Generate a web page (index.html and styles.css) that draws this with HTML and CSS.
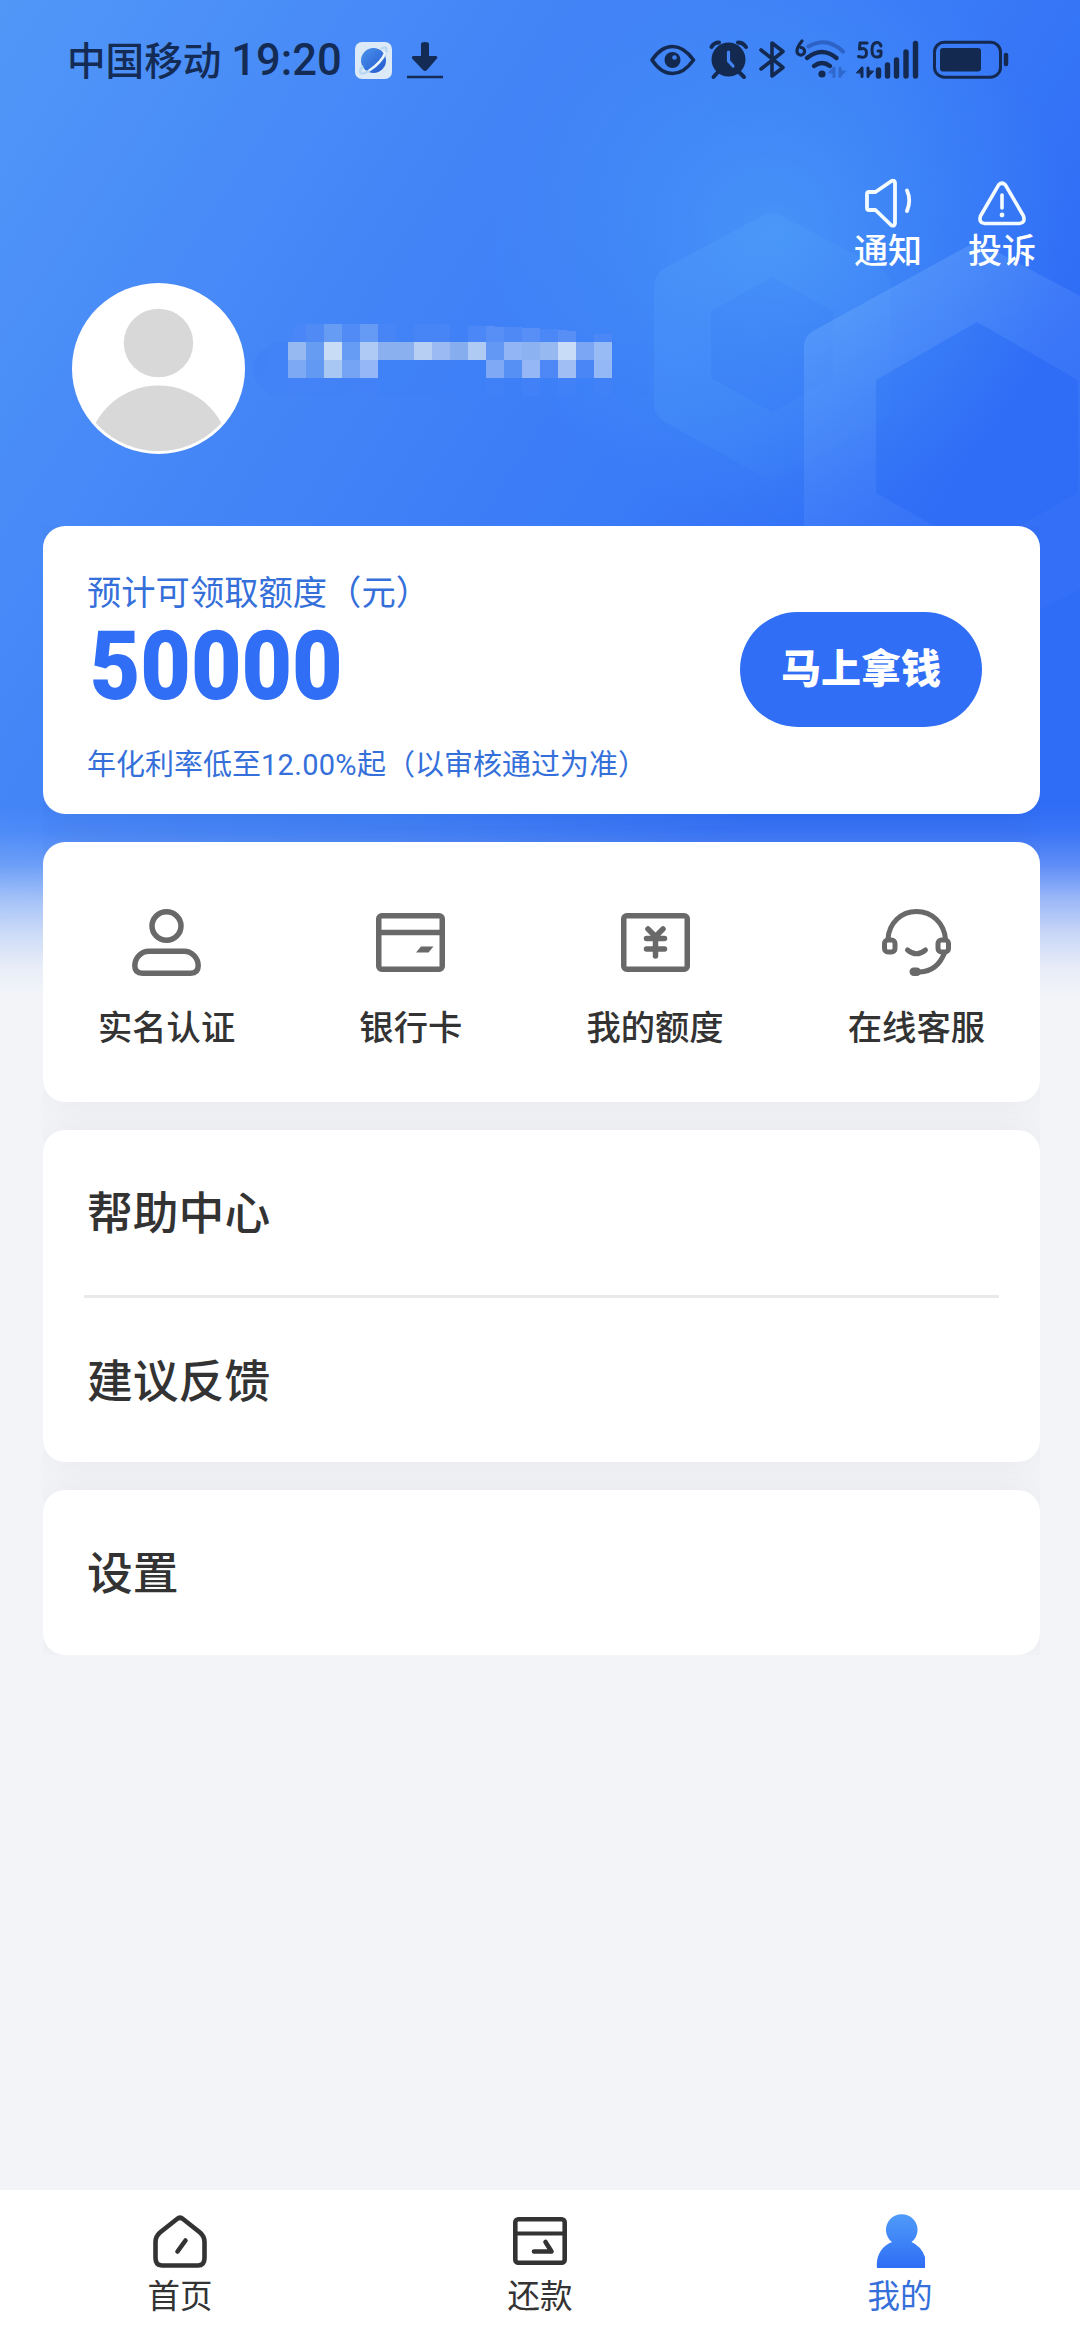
FILE: index.html
```html
<!DOCTYPE html>
<html lang="zh-CN">
<head>
<meta charset="utf-8">
<title>我的</title>
<link rel="stylesheet" href="styles.css">
</head>
<body>
<div class="page">
  <div class="backdrop">
    <svg width="1080" height="1000" viewBox="0 0 1080 1000">
      <defs>
        <linearGradient id="hexSmall" gradientUnits="userSpaceOnUse" x1="680" y1="260" x2="850" y2="420">
          <stop offset="0" stop-color="#55a4fa" stop-opacity=".26"/>
          <stop offset=".5" stop-color="#55a4fa" stop-opacity=".18"/>
          <stop offset="1" stop-color="#55a4fa" stop-opacity=".04"/>
        </linearGradient>
        <linearGradient id="hexLarge" gradientUnits="userSpaceOnUse" x1="820" y1="300" x2="1010" y2="560">
          <stop offset="0" stop-color="#78b4ff" stop-opacity=".36"/>
          <stop offset=".5" stop-color="#6aa0ff" stop-opacity=".2"/>
          <stop offset="1" stop-color="#5a90ff" stop-opacity=".08"/>
        </linearGradient>
      </defs>
      <path fill="url(#hexSmall)" fill-rule="evenodd" d="M762 216Q772 211 782 216L880 268Q891 275 891 288V404Q891 416 880 422L782 476Q772 481 762 476L665 422Q654 416 654 404V288Q654 275 665 268ZM772 277L711 311V378L772 412L833 378V311Z"/>
      <path fill="url(#hexLarge)" fill-rule="evenodd" d="M966 247Q977 240 988 247L1140 328V560L977 640L804 560V346Q804 337 813 331ZM977 322L876 380V493L977 550L1078 493V380Z"/>
    </svg>
  </div>

  <header class="status">
    <div class="status-left">
      <span class="carrier">中国移动</span><span class="clock">19:20</span>
      <svg class="app" width="37" height="37" viewBox="0 0 37 37">
        <defs><linearGradient id="planet" x1="0" y1="0" x2="1" y2="1"><stop offset="0" stop-color="#4a93ec"/><stop offset="1" stop-color="#2457cf"/></linearGradient></defs>
        <rect width="37" height="37" rx="7" fill="#dce9f6"/>
        <circle cx="18.500" cy="18.500" r="12.500" fill="url(#planet)"/>
        <path d="M26 7Q33 3 31 10Q27 20 15 28Q8 33 5.500 31Q4 28 8 24" fill="none" stroke="#b9d8f2" stroke-width="2.500"/>
        <path d="M30.500 10Q26 21 14 28.500" fill="none" stroke="#edf5fc" stroke-width="2"/>
      </svg>
      <svg width="36" height="38" viewBox="0 0 36 38"><path d="M14 3Q14 1 18 1T22 3V15H29Q31.500 16 29.500 18L20 29Q18 31 16 29L5.500 18Q4 16 6 15H14Z" fill="#142c55"/><path d="M0 36H36" stroke="#142c55" stroke-width="2.600"/></svg>
    </div>
    <svg class="status-icons" width="360" height="44" viewBox="650 38 360 44" fill="none" stroke="#132950" stroke-linecap="round" stroke-linejoin="round">
      <path d="M652 60Q661 46.500 672.500 46.500T693.500 60Q684 73.500 672.500 73.500T652 60Z" stroke-width="3.600"/>
      <circle cx="672.500" cy="60" r="8" fill="#132950" stroke="none"/><circle cx="674.500" cy="57.500" r="2.300" fill="#3f80f4" stroke="none"/>
      <circle cx="728.500" cy="59.500" r="17" fill="#132950" stroke="none"/>
      <path d="M711.500 47Q714 42.500 719 42.500M746 47Q743 42.500 738 42.500" stroke-width="4"/>
      <path d="M718 72L713.500 77M739 72L744 77" stroke-width="4"/>
      <path d="M728.500 52V61L733 66" stroke="#4384f4" stroke-width="3.200"/>
      <path d="M761 50L783 67.500L772 76V43L783 51.500L761 69" stroke-width="3.600"/>
      <path d="M802 41Q797 47 797 51A3.800 3.800 0 1 0 801 47.500" stroke-width="3.200"/>
      <path d="M808.500 46.500Q827 36 843 51.500" stroke="#2d62c7" stroke-width="4"/>
      <path d="M807 58Q822 46 836.500 58M814 66Q822 60 830 66" stroke-width="4.400"/>
      <circle cx="822" cy="74" r="3.600" fill="#132950" stroke="none"/>
      <path d="M834 68V76.500M840 68V76.500" stroke="#2f68cf" stroke-width="3"/>
      <path d="M828.500 72.500L834 67V73ZM845.500 71.500L840 77V71Z" fill="#2f68cf" stroke="#2f68cf" stroke-width="1"/>
      <path d="M867 43H860L859.500 49Q866.500 47 866.500 53T858.500 56.500M881 46Q880 42.500 877 42.500Q872 42.500 872 50T877 57Q881 57 881 54V51H878" stroke-width="3"/>
      <path d="M862 68V76.500M868 68V76.500" stroke-width="3"/>
      <path d="M856.500 72.500L862 67V73ZM873.500 71.500L868 77V71Z" fill="#132950" stroke-width="1"/>
      <path d="M878.500 70V76M887.500 65V76M896.500 60V76M906 52V76M915.500 43.500V76" stroke-width="5.400"/>
      <rect x="934.500" y="42.200" width="66" height="35" rx="10" stroke-width="3"/>
      <rect x="940" y="48" width="41" height="23.500" rx="3" fill="#132950" stroke="none"/>
      <path d="M1006 55V64" stroke-width="4.500"/>
    </svg>
  </header>

  <nav class="actions">
    <a class="action">
      <svg width="50" height="52" viewBox="0 0 50 52" fill="none" stroke="#f4fbff" stroke-width="3.800" stroke-linejoin="round" stroke-linecap="round"><path d="M4 17Q4 15 6 15H12.500L28.500 4Q32 3 32 6V46Q32 49.500 28.500 48.500L12.500 33H6Q4 33 4 31Z" /><path d="M44 13.500Q48.500 23 44 34"/></svg>
      <span>通知</span>
    </a>
    <a class="action">
      <svg width="50" height="52" viewBox="0 0 50 52" fill="none" stroke="#f4fbff" stroke-width="3.600" stroke-linecap="round"><path d="M21.500 8Q25 4.500 28.500 8L46.500 39Q48.500 46 42.500 46.500H7.500Q1.500 46 3.500 39Z"/><path d="M25 18V31"/><circle cx="25" cy="38" r="2.400" fill="#f4fbff" stroke="none"/></svg>
      <span>投诉</span>
    </a>
  </nav>

  <section class="profile">
    <svg class="avatar" width="173" height="171" viewBox="0 0 173 171">
      <defs><clipPath id="face"><ellipse cx="86.500" cy="84.500" rx="84" ry="83.500"/></clipPath></defs>
      <ellipse cx="86.500" cy="85.500" rx="86.500" ry="85.500" fill="#fff"/>
      <ellipse cx="86.500" cy="60" rx="34.700" ry="34.300" fill="#d8d8d8"/>
      <circle cx="86.500" cy="174" r="71.500" fill="#d8d8d8" clip-path="url(#face)"/>
    </svg>
    <svg class="masked-name" width="400" height="90" viewBox="252 324 400 90" shape-rendering="crispEdges">
      <path d="M270 347Q254 352 253 369Q254 386 270 394Z" fill="#4080f7" opacity=".6"/>
      <path d="M270 342H648V396H270Z" fill="#3d7ff7" opacity=".25"/>
      <path d="M291 342Q292 324 306 324V342Z" fill="#4a86f7"/>
      <path d="M306 324h18v18h-18z" fill="#4f8af5"/><path d="M324 324h18v18h-18z" fill="#669cf3"/><path d="M342 324h18v18h-18z" fill="#508bf6"/><path d="M360 324h18v18h-18z" fill="#659af5"/>
      <path d="M378 324h18v18h-18zM414 324h36v18h-36z" fill="#4785f6"/>
      <path d="M468 326h18v16h-18zM540 329h18v13h-18zM594 334h18v8h-18z" fill="#4b87f7"/>
      <path d="M486 326L504 327V342H486zM522 328h18v14h-18zM558 330l18 1v11h-18z" fill="#578ff6"/><path d="M504 327h18v15h-18z" fill="#4e89f6"/>
      <path d="M288 342h18v18h-18z" fill="#97b9f1"/><path d="M306 342h18v18h-18z" fill="#669df3"/><path d="M324 342h18v18h-18z" fill="#c8dcf6"/><path d="M342 342h18v18h-18z" fill="#669cf3"/><path d="M360 342h18v18h-18z" fill="#afcaf5"/><path d="M378 342h36v18h-36z" fill="#8bb0f0"/><path d="M414 342h18v18h-18z" fill="#b7cff2"/><path d="M432 342h18v18h-18z" fill="#9bbaf3"/><path d="M450 342h18v18h-18z" fill="#86adee"/><path d="M468 342h18v18h-18z" fill="#b0cbf3"/><path d="M486 342h18v18h-18z" fill="#6398f4"/><path d="M504 342h18v18h-18z" fill="#92b6f5"/><path d="M522 342h18v18h-18z" fill="#8db2f2"/><path d="M540 342h18v18h-18z" fill="#97b9f2"/><path d="M558 342h18v18h-18z" fill="#c8dcf7"/><path d="M576 342h18v18h-18z" fill="#7ba6f3"/><path d="M594 342h18v18h-18z" fill="#98baf5"/>
      <path d="M288 360h18v18h-18z" fill="#7da8f3"/><path d="M306 360h18v18h-18z" fill="#6199f3"/><path d="M324 360h18v18h-18z" fill="#a9c7f3"/><path d="M342 360h18v18h-18z" fill="#76a4f4"/><path d="M360 360h18v18h-18z" fill="#95b7f7"/><path d="M486 360h18v18h-18z" fill="#7fa9f5"/><path d="M504 360h18v18h-18z" fill="#5790f4"/><path d="M522 360h18v18h-18z" fill="#95b7f5"/><path d="M540 360h18v18h-18z" fill="#4d88f6"/><path d="M558 360h18v18h-18z" fill="#a1bef4"/><path d="M576 360h18v18h-18z" fill="#4b86f6"/><path d="M594 360h18v18h-18z" fill="#94b7f5"/>
      <path d="M288 378h90v18h-90zM486 378h18v18h-18zM522 378h18v18h-18zM558 378h18v18h-18zM594 378h18v18h-18z" fill="#4482f7" opacity=".6"/>
    </svg>
  </section>

  <main class="cards">
    <section class="card quota">
      <div class="quota-info">
        <p class="quota-label">预计可领取额度（元）</p>
        <p class="quota-amount">50000</p>
        <p class="quota-rate">年化利率低至<span class="rate-num">12.00%</span>起（以审核通过为准）</p>
      </div>
      <button class="cta">马上拿钱</button>
    </section>

    <section class="card shortcuts">
      <a class="shortcut">
        <svg width="69" height="67" viewBox="0 0 69 67" fill="none" stroke="#696969" stroke-width="5.500"><ellipse cx="34.500" cy="17" rx="14.500" ry="14.200"/><path d="M17 42.200H52C60 42.200 66.200 49 66.200 56.500Q66.200 64.200 58.500 64.200H10.500Q2.800 64.200 2.800 56.500C2.800 49 9 42.200 17 42.200Z"/></svg>
        <span>实名认证</span>
      </a>
      <a class="shortcut">
        <svg width="69" height="67" viewBox="0 0 69 67" fill="none" stroke="#696969" stroke-width="5.500"><rect x="2.750" y="6.750" width="63.500" height="53.500" rx="3"/><path d="M3 23.500H66"/><path d="M45 37.500H57.500L52.500 43.500H40Z" fill="#696969" stroke="none"/></svg>
        <span>银行卡</span>
      </a>
      <a class="shortcut">
        <svg width="69" height="67" viewBox="0 0 69 67" fill="none" stroke="#696969" stroke-width="5.500" stroke-linecap="round"><rect x="2.750" y="6.750" width="63.500" height="53.500" rx="3"/><path d="M27 20L34.500 27.500L42 20M25.500 29.500H43.500M25.500 40H43.500M34.500 27.500V47"/></svg>
        <span>我的额度</span>
      </a>
      <a class="shortcut">
        <svg width="69" height="67" viewBox="0 0 69 67" fill="none" stroke="#696969" stroke-width="5" stroke-linecap="round"><path d="M6 30C7 14 19 2.500 34.500 2.500S62 14 63.500 30"/><rect x="2.500" y="31" width="10.500" height="12" rx="3.500"/><rect x="56" y="31" width="10.500" height="12" rx="3.500"/><path d="M25.500 41Q34.500 48.500 43.500 41M62 45Q55 62 38 63"/><rect x="27.500" y="58.500" width="11.500" height="8.500" rx="4.200" fill="#696969" stroke="none"/></svg>
        <span>在线客服</span>
      </a>
    </section>

    <section class="card menu">
      <a class="menu-item">帮助中心</a>
      <a class="menu-item">建议反馈</a>
    </section>

    <section class="card menu">
      <a class="menu-item">设置</a>
    </section>
  </main>

  <footer class="tabs">
    <a class="tab">
      <svg width="54" height="54" viewBox="0 0 54 54" fill="none" stroke="#333" stroke-width="4.600" stroke-linecap="round"><path d="M24 5Q27 2.500 30 5L47 18.500Q51.500 22.500 51.500 28V44Q51.500 51.500 45 51.500H9Q2.500 51.500 2.500 44V28Q2.500 22.500 7 18.500Z"/><path d="M32.500 26.500L24.500 37.500"/></svg>
      <span>首页</span>
    </a>
    <a class="tab">
      <svg width="54" height="54" viewBox="0 0 54 54" fill="none" stroke="#333" stroke-width="4.600" stroke-linecap="round" stroke-linejoin="round"><rect x="2.300" y="5.300" width="49.400" height="43.500" rx="3"/><path d="M3 19.500H51" stroke-width="4"/><path d="M32.500 28L38.500 37.500H21"/></svg>
      <span>还款</span>
    </a>
    <a class="tab tab-active">
      <svg width="54" height="54" viewBox="0 0 54 54"><defs><linearGradient id="me" x1="0" y1="0" x2="0" y2="1"><stop offset="0" stop-color="#4f9bf9"/><stop offset="1" stop-color="#2f6df5"/></linearGradient></defs><path fill="url(#me)" d="M4 54C2.500 42 9 31.500 19 28A15.800 15.500 0 1 1 38.500 28Q48 32 52 43V54Z"/></svg>
      <span>我的</span>
    </a>
  </footer>
</div>
</body>
</html>
```

FILE: styles.css
```css
* { box-sizing: border-box; }

body {
  margin: 0;
  font-family: "Noto Sans CJK SC", sans-serif;
  color: #333;
  background: #f3f4f8;
}

p { margin: 0; }
svg { display: block; flex: none; }

.page {
  position: relative;
  display: flex;
  flex-direction: column;
  width: 1080px;
  height: 2340px;
  overflow: hidden;
}

/* decorative blue header that dissolves into the page */
.backdrop {
  position: absolute;
  inset: 0 0 auto;
  z-index: -1;
  height: 1000px;
  background:
    radial-gradient(circle at 775px 235px, rgba(74, 156, 248, .72), rgba(74, 156, 248, .35) 130px, rgba(74, 156, 248, 0) 290px),
    linear-gradient(123deg, #5197f8 0%, #4283f7 34%, #3a7bf7 54%, #2f6df6 74%, #2f6df6 100%);
  -webkit-mask-image: linear-gradient(#000 805px, rgba(0, 0, 0, .95) 830px, rgba(0, 0, 0, .76) 865px, rgba(0, 0, 0, .44) 900px, rgba(0, 0, 0, .22) 933px, rgba(0, 0, 0, .06) 967px, transparent 995px);
  mask-image: linear-gradient(#000 805px, rgba(0, 0, 0, .95) 830px, rgba(0, 0, 0, .76) 865px, rgba(0, 0, 0, .44) 900px, rgba(0, 0, 0, .22) 933px, rgba(0, 0, 0, .06) 967px, transparent 995px);
}

.status {
  display: flex;
  align-items: center;
  justify-content: space-between;
  height: 120px;
  padding: 0 70px 0 67px;
  color: #142c55;
}

.status-left {
  display: flex;
  align-items: center;
}

.carrier {
  padding-bottom: 4px;
  font-size: 38.600px;
  line-height: 60px;
  font-weight: 500;
}

.clock {
  width: 110px;
  margin-left: 10px;
  padding-top: 2px;
  font: 500 43.500px/60px Roboto, sans-serif;
  white-space: nowrap;
}

.app { margin: 0 15px 0 14px; }

.actions {
  display: flex;
  justify-content: flex-end;
  gap: 46px;
  height: 163px;
  padding: 57px 44px 0 0;
}

.action {
  display: flex;
  flex-direction: column;
  align-items: center;
  width: 68px;
  color: #fff;
  font-size: 34px;
  font-weight: 500;
  line-height: 40px;
}

.profile {
  display: flex;
  align-items: flex-start;
  height: 243px;
  padding-left: 72px;
}

.masked-name { margin: 41px 0 0 7px; }

.cards {
  display: flex;
  flex-direction: column;
  gap: 28px;
  margin: 0 40px 0 43px;
  overflow: hidden;
}

.card {
  background: #fff;
  border-radius: 22px;
  box-shadow: 0 0 40px rgba(0, 0, 0, .05);
}

.quota {
  display: flex;
  align-items: center;
  justify-content: space-between;
  height: 288px;
  padding: 0 58px 0 44px;
  color: #3570da;
}

.quota-info { align-self: flex-start; }

.quota-label {
  padding-top: 39px;
  font-size: 34.300px;
  line-height: 50px;
}

.quota-amount {
  height: 95px;
  padding: 3px 0 0 3px;
  color: #306ef5;
  font: 900 97px/96px Roboto, sans-serif;
  transform: scaleX(.9);
  transform-origin: left;
}

.quota-rate {
  margin-top: 30px;
  font-size: 29px;
  line-height: 44px;
}

.rate-num { font-family: Roboto, sans-serif; letter-spacing: .3px; }

.cta {
  width: 242px;
  height: 115px;
  margin-bottom: 2px;
  padding: 0 0 7px;
  border: 0;
  border-radius: 58px;
  background: #306ef5;
  color: #fff;
  font: 900 40px/60px "Noto Sans CJK SC", sans-serif;
}

.shortcuts {
  display: flex;
  justify-content: space-between;
  height: 260px;
  padding: 67px 55px 0;
}

.shortcut {
  display: flex;
  flex-direction: column;
  align-items: center;
  gap: 24px;
  font-size: 34.300px;
  font-weight: 500;
  line-height: 50px;
}

.menu { padding: 0 41px; }

.menu-item {
  display: block;
  height: 165px;
  padding: 0 3px;
  font-size: 45.800px;
  font-weight: 500;
  line-height: 160px;
}

.menu-item + .menu-item {
  height: 167px;
  border-top: 3px solid #e9e9e9;
}

.tabs {
  display: flex;
  height: 150px;
  margin-top: auto;
  background: #fff;
}

.tab {
  display: flex;
  flex: 1;
  flex-direction: column;
  align-items: center;
  padding-top: 24px;
  font-size: 32.500px;
  line-height: 52px;
}

.tab-active { color: #3570da; }
```
